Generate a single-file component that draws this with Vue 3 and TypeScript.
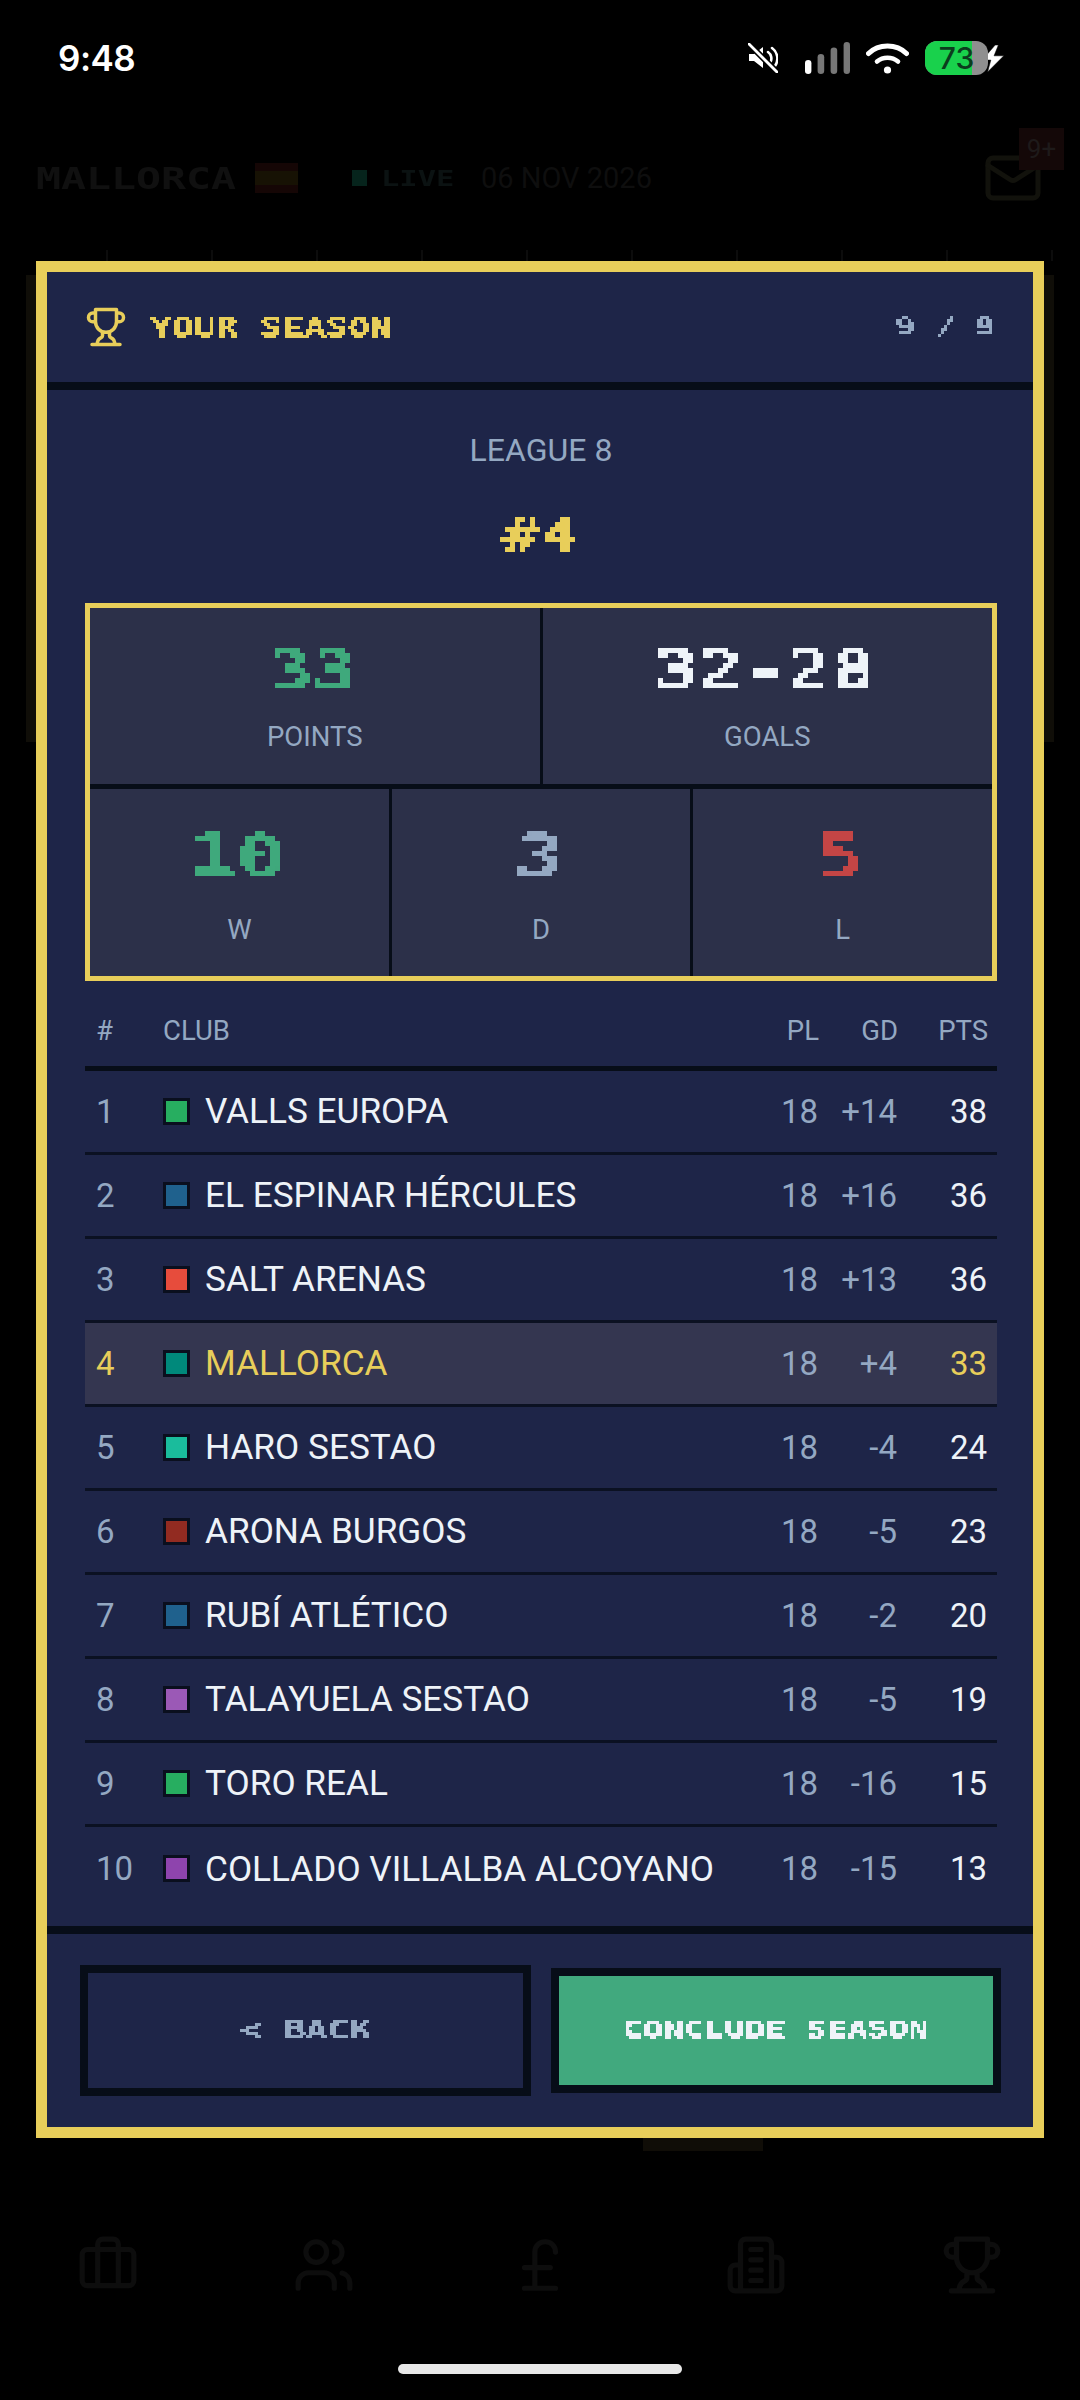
<template>
  <div class="screen">
    <svg class="defs" width="0" height="0">
      <defs>
        <filter id="px5" x="-60%" y="-20%" width="220%" height="140%" color-interpolation-filters="sRGB">
          <feFlood x="2" y="2" width="1" height="1" />
          <feComposite width="5" height="5" />
          <feTile result="grid" />
          <feComposite in="SourceGraphic" in2="grid" operator="in" />
          <feMorphology operator="dilate" radius="2" />
          <feComponentTransfer>
            <feFuncA type="discrete" tableValues="0 1" />
          </feComponentTransfer>
        </filter>
        <filter id="px3" x="-60%" y="-20%" width="220%" height="140%" color-interpolation-filters="sRGB">
          <feFlood x="1" y="1" width="1" height="1" />
          <feComposite width="3" height="3" />
          <feTile result="grid" />
          <feComposite in="SourceGraphic" in2="grid" operator="in" />
          <feMorphology operator="dilate" radius="1" />
          <feComponentTransfer>
            <feFuncA type="discrete" tableValues="0 1 1 1" />
          </feComponentTransfer>
        </filter>
      </defs>
    </svg>

    <div class="status-bar">
      <span class="clock">9:48</span>
      <div class="status-icons">
        <svg class="ic-mute" viewBox="0 0 30 30" fill="none">
          <path d="M1 11h5l9-7v21l-9-7H1z" fill="#fff" />
          <path d="M20 9a8 8 0 0 1 2 11M24 5a13 13 0 0 1 3 18" stroke="#fff" stroke-width="2.6" stroke-linecap="round" />
          <path d="M1 1l28 28" stroke="#000" stroke-width="6" />
          <path d="M1 1l28 28" stroke="#fff" stroke-width="2.8" stroke-linecap="round" />
        </svg>
        <svg class="ic-signal" viewBox="0 0 45 32">
          <rect x="0" y="18" width="6.4" height="14" rx="3.2" fill="#fff" />
          <rect x="12.6" y="12" width="6.6" height="20" rx="3.3" fill="#777" />
          <rect x="25.6" y="5.5" width="6.6" height="26.5" rx="3.3" fill="#777" />
          <rect x="38.6" y="0" width="6.4" height="32" rx="3.2" fill="#777" />
        </svg>
        <svg class="ic-wifi" viewBox="0 0 43 32" fill="none" stroke="#fff" stroke-linecap="round">
          <path d="M2.5 11.5C12.5 1.5 30.5 1.5 40.5 11.5" stroke-width="5" />
          <path d="M11 19.5c6-5 15-5 21 0" stroke-width="4.6" />
          <circle cx="21.5" cy="28" r="3.6" fill="#fff" stroke="none" />
        </svg>
        <div class="battery">
          <div class="battery-fill" />
          <span class="battery-num">73</span>
        </div>
        <svg class="ic-bolt" viewBox="0 0 22 25">
          <path d="M13 0L1 14h8l-3 11 15-15h-9l4-10z" fill="#fff" stroke="#000" stroke-width="0.5" />
        </svg>
      </div>
    </div>

    <div class="app-head">
      <span class="ghost-club"><span class="px px-left">MALLORCA</span></span>
      <svg class="ghost-flag" viewBox="0 0 43 30">
        <rect width="43" height="30" fill="#150605" />
        <rect y="8" width="43" height="14" fill="#171204" />
      </svg>
      <span class="ghost-dot" />
      <span class="ghost-live"><span class="px px-left">LIVE</span></span>
      <span class="ghost-date">06 NOV 2026</span>
      <div class="ghost-mail">
        <svg viewBox="0 0 24 24" fill="none" stroke="#12120c" stroke-width="2" stroke-linecap="round" stroke-linejoin="round">
          <rect x="2" y="4" width="20" height="16" rx="2" />
          <path d="m22 7-8.97 5.7a1.94 1.94 0 0 1-2.06 0L2 7" />
        </svg>
        <span class="ghost-badge">9+</span>
      </div>
    </div>

    <div class="ghost-ticks" />
    <div class="ghost-panel" />
    <div class="ghost-strip" />

    <div class="ghost-nav">
      <svg v-for="icon in navIcons" :key="icon" viewBox="0 0 24 24" fill="none" stroke="#0d0d0d" stroke-width="2" stroke-linecap="round" stroke-linejoin="round">
        <path :d="icon" />
      </svg>
    </div>
    <div class="home-bar" />

    <div class="modal">
      <header class="modal-head">
        <svg class="trophy" viewBox="0 0 24 24" fill="none" stroke="#e8ce5a" stroke-width="2" stroke-linecap="round" stroke-linejoin="round">
          <path :d="trophyPath" />
        </svg>
        <span class="title pix-sm"><span class="px px-left">YOUR SEASON</span></span>
        <span class="step pix-sm"><span class="px px-right">9 / 9</span></span>
      </header>

      <section class="modal-body">
        <div class="league">LEAGUE 8</div>
        <div class="rank pix-lg"><span class="px">#4</span></div>

        <div class="stats">
          <div class="stats-row stats-row--top">
            <div class="stat">
              <div class="stat-val stat-val--lg green pix-lg"><span class="px">33</span></div>
              <div class="stat-label">POINTS</div>
            </div>
            <div class="stat">
              <div class="stat-val stat-val--lg white pix-lg"><span class="px">32-28</span></div>
              <div class="stat-label">GOALS</div>
            </div>
          </div>
          <div class="stats-row stats-row--bottom">
            <div class="stat">
              <div class="stat-val green pix-lg"><span class="px">10</span></div>
              <div class="stat-label">W</div>
            </div>
            <div class="stat">
              <div class="stat-val slate pix-lg"><span class="px">3</span></div>
              <div class="stat-label">D</div>
            </div>
            <div class="stat">
              <div class="stat-val red pix-lg"><span class="px">5</span></div>
              <div class="stat-label">L</div>
            </div>
          </div>
        </div>

        <div class="table">
          <div class="row row--head">
            <span>#</span>
            <span>CLUB</span>
            <span class="num">PL</span>
            <span class="num">GD</span>
            <span class="num">PTS</span>
          </div>
          <div
            v-for="(club, i) in clubs"
            :key="club.name"
            class="row"
            :class="{ 'row--me': club.name === 'MALLORCA', 'row--last': i === clubs.length - 1 }"
          >
            <span class="pos">{{ i + 1 }}</span>
            <span class="club">
              <span class="swatch" :style="{ background: club.color }" />
              {{ club.name }}
            </span>
            <span class="num muted">18</span>
            <span class="num muted">{{ club.gd }}</span>
            <span class="num pts">{{ club.pts }}</span>
          </div>
        </div>
      </section>

      <footer class="modal-foot">
        <button type="button" class="btn btn--back"><span class="pix-sm"><span class="px btn-px">&lt; BACK</span></span></button>
        <button type="button" class="btn btn--go"><span class="pix-sm"><span class="px btn-px btn-px--sm">CONCLUDE SEASON</span></span></button>
      </footer>
    </div>
  </div>
</template>

<script setup lang="ts">
type Club = {
  name: string
  color: string
  gd: string
  pts: number
}

const clubs: Club[] = [
  { name: 'VALLS EUROPA', color: '#27ae60', gd: '+14', pts: 38 },
  { name: 'EL ESPINAR HÉRCULES', color: '#1f618d', gd: '+16', pts: 36 },
  { name: 'SALT ARENAS', color: '#e74c3c', gd: '+13', pts: 36 },
  { name: 'MALLORCA', color: '#00897b', gd: '+4', pts: 33 },
  { name: 'HARO SESTAO', color: '#1abc9c', gd: '-4', pts: 24 },
  { name: 'ARONA BURGOS', color: '#922b21', gd: '-5', pts: 23 },
  { name: 'RUBÍ ATLÉTICO', color: '#1f618d', gd: '-2', pts: 20 },
  { name: 'TALAYUELA SESTAO', color: '#9b59b6', gd: '-5', pts: 19 },
  { name: 'TORO REAL', color: '#27ae60', gd: '-16', pts: 15 },
  { name: 'COLLADO VILLALBA ALCOYANO', color: '#8e44ad', gd: '-15', pts: 13 },
]

const trophyPath =
  'M6 9H4.5a2.5 2.5 0 0 1 0-5H6M18 9h1.5a2.5 2.5 0 0 0 0-5H18M4 22h16M10 14.66V17c0 .55-.47.98-.97 1.21C7.85 18.75 7 20.24 7 22M14 14.66V17c0 .55.47.98.97 1.21C16.15 18.75 17 20.24 17 22M18 2H6v7a6 6 0 0 0 12 0V2Z'

const navIcons: string[] = [
  'M16 20V4a2 2 0 0 0-2-2h-4a2 2 0 0 0-2 2v16M4 6h16a2 2 0 0 1 2 2v10a2 2 0 0 1-2 2H4a2 2 0 0 1-2-2V8a2 2 0 0 1 2-2Z',
  'M16 21v-2a4 4 0 0 0-4-4H6a4 4 0 0 0-4 4v2M9 3a4 4 0 1 0 0 8 4 4 0 0 0 0-8ZM22 21v-2a4 4 0 0 0-3-3.87M16 3.13a4 4 0 0 1 0 7.75',
  'M18 7c0-5.33-8-5.33-8 0M10 7v14M6 21h12M6 13h10',
  'M6 22V4a2 2 0 0 1 2-2h8a2 2 0 0 1 2 2v18ZM6 12H4a2 2 0 0 0-2 2v6a2 2 0 0 0 2 2h2M18 9h2a2 2 0 0 1 2 2v9a2 2 0 0 1-2 2h-2M10 6h4M10 10h4M10 14h4M10 18h4',
  trophyPath,
]
</script>

<style>
html,
body {
  margin: 0;
  background: #000;
}
</style>

<style scoped>
.screen {
  position: relative;
  width: 1080px;
  height: 2400px;
  background: #000;
  overflow: hidden;
  display: flex;
  flex-direction: column;
  font-family: Roboto, sans-serif;
}

.defs {
  position: absolute;
}

/* blocky text: a mono bold stretched out to the wide pixel-font proportions */
.px {
  display: inline-block;
  font-family: 'DejaVu Sans Mono', monospace;
  font-weight: 700;
  transform: scaleX(1.385);
  white-space: pre;
  line-height: 1;
}

.px-left {
  transform-origin: left center;
}

.px-right {
  transform-origin: right center;
}

.pix-lg {
  filter: url(#px5);
}

.pix-sm {
  filter: url(#px3);
}

/* status bar */
.status-bar {
  height: 114px;
  box-sizing: border-box;
  padding: 2px 75px 0 58px;
  display: flex;
  align-items: center;
  justify-content: space-between;
  flex-shrink: 0;
}

.clock {
  color: #fff;
  font-family: Inter, sans-serif;
  font-weight: 600;
  font-size: 35px;
  letter-spacing: -0.5px;
}

.status-icons {
  display: flex;
  align-items: center;
}

.ic-mute {
  width: 30px;
  height: 30px;
  margin-right: 27px;
}

.ic-signal {
  width: 45px;
  height: 32px;
  margin-right: 16px;
}

.ic-wifi {
  width: 43px;
  height: 32px;
  margin-right: 16px;
}

.battery {
  position: relative;
  width: 63px;
  height: 34px;
  border-radius: 12px;
  background: #8f8f8f;
  overflow: hidden;
}

.battery-fill {
  width: 47px;
  height: 100%;
  background: #19d14c;
}

.battery-num {
  position: absolute;
  inset: 0;
  display: flex;
  align-items: center;
  justify-content: center;
  color: #0b3d1d;
  font-family: Inter, sans-serif;
  font-size: 30px;
  font-weight: 500;
}

.ic-bolt {
  width: 24px;
  height: 27px;
  margin-left: -7px;
}

/* dimmed page behind the modal */
.app-head {
  display: flex;
  align-items: center;
  height: 128px;
  padding: 0 37px 0 36px;
  flex-shrink: 0;
}

.ghost-club {
  width: 219px;
  color: #101010;
  font-size: 30px;
  flex-shrink: 0;
}

.ghost-flag {
  width: 43px;
  height: 30px;
  margin-right: 54px;
}

.ghost-dot {
  width: 15px;
  height: 16px;
  background: #06241c;
  margin-right: 14px;
}

.ghost-live {
  width: 100px;
  color: #0b1212;
  font-size: 22px;
}

.ghost-date {
  color: #0e0e0e;
  font-size: 29px;
}

.ghost-mail {
  position: relative;
  margin-left: auto;
  width: 60px;
  height: 60px;
}

.ghost-badge {
  position: absolute;
  top: -20px;
  right: -21px;
  width: 45px;
  height: 42px;
  background: #140808;
  color: #1e1a1a;
  font-size: 26px;
  text-align: center;
  line-height: 42px;
}

.ghost-ticks {
  position: absolute;
  left: 106px;
  right: 0;
  top: 250px;
  height: 11px;
  background: repeating-linear-gradient(90deg, #0c0c0c 0 2px, transparent 2px 105px);
}

.ghost-panel {
  position: absolute;
  left: 26px;
  right: 26px;
  top: 275px;
  height: 467px;
  background: #100e08;
}

.ghost-strip {
  position: absolute;
  left: 643px;
  top: 2130px;
  width: 120px;
  height: 21px;
  background: #100d07;
}

.ghost-nav {
  margin-top: auto;
  margin-bottom: 104px;
  display: grid;
  grid-template-columns: repeat(5, 216px);
  justify-items: center;
}

.ghost-nav svg {
  width: 62px;
  height: 62px;
}

.home-bar {
  position: absolute;
  left: 398px;
  bottom: 26px;
  width: 284px;
  height: 10px;
  border-radius: 5px;
  background: #e8e8e8;
}

/* modal */
.modal {
  position: absolute;
  left: 36px;
  top: 261px;
  width: 1008px;
  height: 1877px;
  box-sizing: border-box;
  border: 11px solid #e8ce5a;
  background: #1e2548;
  display: flex;
  flex-direction: column;
}

.modal-head {
  height: 118px;
  box-sizing: border-box;
  border-bottom: 8px solid #070d18;
  padding: 0 38px;
  display: flex;
  align-items: center;
  flex-shrink: 0;
}

.trophy {
  width: 42px;
  height: 42px;
  margin-right: 23px;
}

.title {
  padding-top: 2px;
  color: #e8ce5a;
  font-size: 26.4px;
}

.step {
  margin-left: auto;
  color: #94a8c2;
  font-size: 24px;
}

.modal-body {
  flex: 1;
  padding: 0 36px 0 38px;
  display: flex;
  flex-direction: column;
}

.league {
  margin-top: 42px;
  text-align: center;
  color: #94a8c2;
  font-size: 32px;
  line-height: 36px;
}

.rank {
  margin-top: 44px;
  text-align: center;
  color: #e8ce5a;
  font-size: 46px;
  line-height: 46px;
}

.stats {
  margin-top: 45px;
  height: 378px;
  box-sizing: border-box;
  border: 5px solid #e8ce5a;
  background: #070d18;
  display: flex;
  flex-direction: column;
  gap: 5px;
  flex-shrink: 0;
}

.stats-row {
  display: flex;
  gap: 3px;
}

.stats-row--top {
  height: 176px;
}

.stats-row--bottom {
  flex: 1;
}

.stat {
  flex: 1;
  background: #2c3049;
  text-align: center;
}

/* the pixel font leaves a gap after each glyph, so its digits sit left of centre */
.stat-val {
  margin-top: 37px;
  padding-right: 5px;
  height: 46px;
  font-size: 59px;
  line-height: 46px;
}

.stat-val--lg {
  margin-top: 35px;
  padding-right: 4px;
  font-size: 53px;
}

.stat-label {
  margin-top: 41px;
  color: #94a8c2;
  font-size: 27.5px;
  line-height: 34px;
}

.stats-row--top .stat-label {
  margin-top: 31px;
}

.green {
  color: #3fa97c;
}

.white {
  color: #eef3f8;
}

.slate {
  color: #94a8c2;
}

.red {
  color: #c44545;
}

.table {
  margin-top: 26px;
}

.row {
  display: grid;
  grid-template-columns: 67px 1fr 60px 79px 90px;
  align-items: center;
  height: 84px;
  box-sizing: border-box;
  padding: 0 10px 1px 11px;
  border-bottom: 3px solid #0b1122;
  color: #eef3f8;
  font-size: 33px;
}

.row--head {
  height: 64px;
  padding-right: 9px;
  padding-bottom: 13px;
  border-bottom: 5px solid #070d18;
  color: #94a8c2;
  font-size: 27.5px;
}

.row--last {
  border-bottom: none;
}

.row--me {
  background: #343650;
  color: #e8ce5a;
}

.pos,
.muted {
  color: #94a8c2;
}

.row--me .pos {
  color: #e8ce5a;
}

.club {
  display: flex;
  align-items: center;
  font-size: 35.2px;
  white-space: nowrap;
}

.swatch {
  width: 27px;
  height: 27px;
  box-sizing: border-box;
  border: 3px solid #0a0f1e;
  margin-right: 15px;
  flex-shrink: 0;
}

.num {
  text-align: right;
}

.row--me .pts {
  color: #e8ce5a;
}

.modal-foot {
  flex-shrink: 0;
  border-top: 8px solid #070d18;
  padding: 0 32px 0 33px;
  height: 201px;
  box-sizing: border-box;
  display: flex;
  align-items: center;
  gap: 20px;
}

.btn {
  box-sizing: border-box;
  border: 8px solid #070d18;
  padding: 0;
  display: flex;
  align-items: center;
  justify-content: center;
  font: inherit;
}

.btn--back {
  width: 451px;
  height: 131px;
  background: #1e2548;
  color: #94a8c2;
}

.btn--go {
  width: 450px;
  height: 125px;
  background: #41a97e;
  color: #eef3f8;
}

.btn-px {
  font-size: 26.4px;
}

.btn-px--sm {
  font-size: 24.5px;
}
</style>
